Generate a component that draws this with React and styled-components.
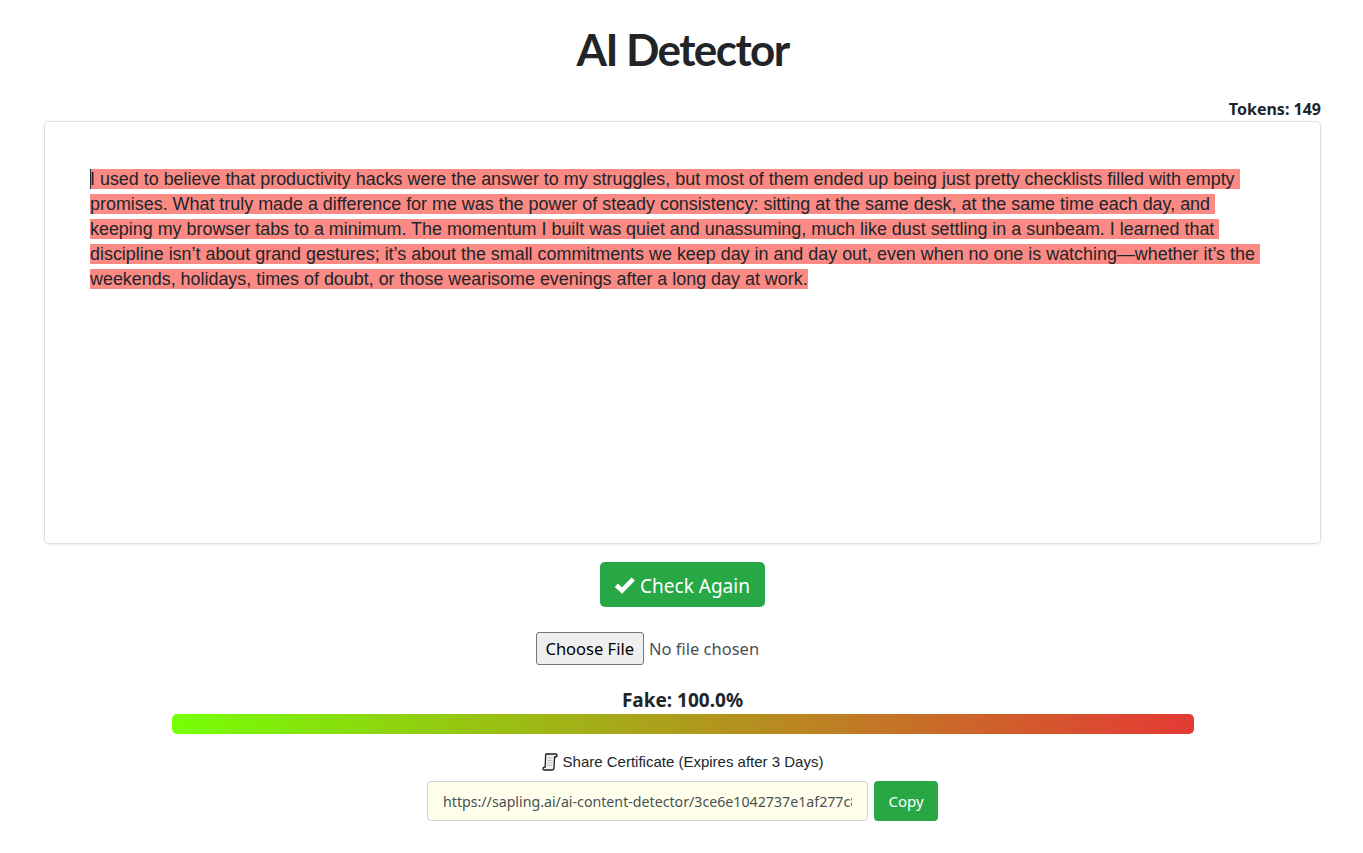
import React from "react";
import styled, { createGlobalStyle } from "styled-components";

const GlobalStyle = createGlobalStyle`
  html, body {
    margin: 0;
    background: #fff;
    color: #212529;
    font-family: "Noto Sans", "Open Sans", sans-serif;
  }
`;

const Page = styled.main`
  display: flex;
  flex-direction: column;
  align-items: center;
  padding: 0 42px 0 44px;
  height: 853px;
  box-sizing: border-box;
`;

const Title = styled.h1`
  margin: 23px 0 0;
  font-family: "Lato", sans-serif;
  font-size: 44px;
  line-height: 52px;
  font-weight: 700;
  letter-spacing: -1.6px;
  color: #212529;
`;

const Tokens = styled.div`
  align-self: flex-end;
  margin-top: 23px;
  font-size: 16px;
  line-height: 23px;
  font-weight: 700;
`;

const EditorBox = styled.div`
  box-sizing: border-box;
  width: 100%;
  height: 423px;
  padding: 45px 45px;
  border: 1px solid #dedede;
  border-radius: 5px;
  box-shadow: 0 1px 3px rgba(0, 0, 0, 0.08);
`;

const Passage = styled.p`
  margin: 0;
  font-family: "Liberation Sans", Arial, sans-serif;
  font-size: 17.92px;
  line-height: 25px;
  white-space: pre-wrap;
`;

const Highlight = styled.span`
  background: #fb8a85;
`;

const Caret = styled.span`
  display: inline-block;
  width: 1px;
  height: 20px;
  margin-right: -1px;
  vertical-align: -4px;
  background: #212529;
`;

const CheckButton = styled.button`
  display: flex;
  align-items: center;
  gap: 4px;
  margin-top: 18px;
  height: 45px;
  padding: 2px 15px 0 14px;
  border: none;
  border-radius: 5px;
  background: #28a745;
  color: #fff;
  font-family: inherit;
  font-size: 19px;
`;

const FileInput = styled.input`
  margin-top: 25px;
  width: 294px;
  height: 33px;
  font-family: inherit;
  font-size: 16.5px;
  color: #495057;

  &::file-selector-button {
    height: 33px;
    margin-right: 5px;
    padding: 0 9px;
    font-family: inherit;
    font-size: 16.5px;
    color: #000;
    background: #efefef;
    border: 1px solid #767676;
    border-radius: 3px;
  }
`;

const ScoreLabel = styled.div`
  margin: 23px 0 1px;
  font-size: 19px;
  line-height: 25px;
  font-weight: 700;
`;

const ScoreBar = styled.div`
  width: 1022px;
  height: 20px;
  border-radius: 5px;
  background: linear-gradient(to right, #76ff03, #e53935);
`;

const ShareLabel = styled.div`
  display: flex;
  align-items: center;
  gap: 5px;
  margin-top: 17px;
  font-family: "Liberation Sans", Arial, sans-serif;
  font-size: 15px;
  line-height: 22px;
`;

const ShareRow = styled.div`
  display: flex;
  gap: 6px;
  margin-top: 8px;
`;

const UrlInput = styled.input`
  box-sizing: border-box;
  width: 441px;
  height: 40px;
  padding: 0 15px;
  border: 1px solid #ced4da;
  border-radius: 4px;
  background: #ffffeb;
  color: #495057;
  font-family: inherit;
  font-size: 14.2px;
`;

const CopyButton = styled.button`
  width: 64px;
  height: 40px;
  border: none;
  border-radius: 4px;
  background: #28a745;
  color: #fff;
  font-family: inherit;
  font-size: 15px;
`;

function CheckIcon() {
  return (
    <svg width="22" height="18" viewBox="0 0 22 18" aria-hidden="true">
      <path d="M2.3 8.3 L8 13.6 L19.3 2" fill="none" stroke="#fff" strokeWidth="4.6" />
    </svg>
  );
}

function ScrollIcon() {
  return (
    <svg width="16" height="18" viewBox="0 0 16 18" aria-hidden="true">
      <path
        d="M4 1 H13.5 C15.5 1 15.7 4 13.5 4 H12.6 L12 15 C11.9 16.4 11 17 9.8 17 H2.5 C.6 17 .4 14.2 2.4 14.2 H3.2 L3.6 2.5 C3.6 1.5 3.7 1 4 1 Z"
        fill="#f1f1ec"
        stroke="#1c1c1c"
        strokeWidth="1.3"
      />
      <path d="M5.5 5 H10.6 M5.4 7.5 H10.5 M5.3 10 H10.4 M5.2 12.5 H10.2" stroke="#b8b8b8" strokeWidth="0.9" />
    </svg>
  );
}

const passage =
  "I used to believe that productivity hacks were the answer to my struggles, but most of them ended up being just pretty checklists filled with empty promises. What truly made a difference for me was the power of steady consistency: sitting at the same desk, at the same time each day, and keeping my browser tabs to a minimum. The momentum I built was quiet and unassuming, much like dust settling in a sunbeam. I learned that discipline isn’t about grand gestures; it’s about the small commitments we keep day in and day out, even when no one is watching—whether it’s the weekends, holidays, times of doubt, or those wearisome evenings after a long day at work.";

export default function App() {
  return (
    <Page>
      <GlobalStyle />
      <Title>AI Detector</Title>
      <Tokens>Tokens: 149</Tokens>
      <EditorBox>
        <Passage>
          <Highlight>
            <Caret />
            {passage}
          </Highlight>
        </Passage>
      </EditorBox>
      <CheckButton>
        <CheckIcon />
        Check Again
      </CheckButton>
      <FileInput type="file" />
      <ScoreLabel>Fake: 100.0%</ScoreLabel>
      <ScoreBar />
      <ShareLabel>
        <ScrollIcon />
        Share Certificate (Expires after 3 Days)
      </ShareLabel>
      <ShareRow>
        <UrlInput readOnly value="https://sapling.ai/ai-content-detector/3ce6e1042737e1af277c8a41d06b5f2e" />
        <CopyButton>Copy</CopyButton>
      </ShareRow>
    </Page>
  );
}
